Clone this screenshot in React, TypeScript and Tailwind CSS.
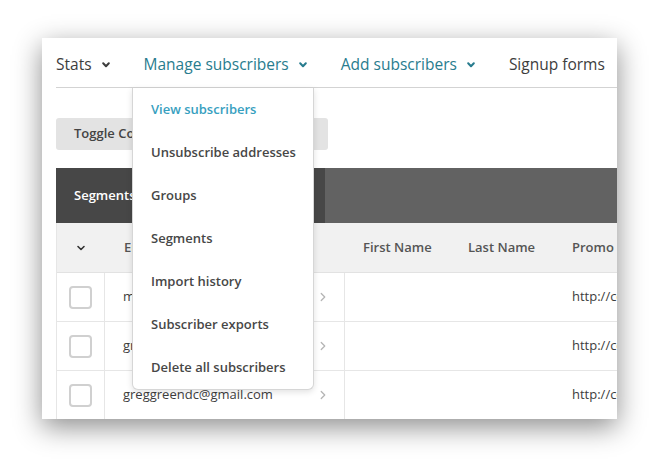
import { ChevronDown, ChevronRight } from 'lucide-react'

const MENU = [
  'View subscribers',
  'Unsubscribe addresses',
  'Groups',
  'Segments',
  'Import history',
  'Subscriber exports',
  'Delete all subscribers',
]

const ROWS = ['mike@example.com', 'greg@example.com', 'greggreendc@gmail.com']

function Caret() {
  return (
    <svg width="8" height="6" viewBox="0 0 8 6" fill="none">
      <polyline points="1.2,1.2 4,4.2 6.8,1.2" stroke="currentColor" strokeWidth="2" strokeLinecap="round" strokeLinejoin="round" />
    </svg>
  )
}

function NavItem({ label, teal, caret }: { label: string; teal?: boolean; caret?: boolean }) {
  return (
    <div className={`flex items-center gap-[10px] text-[15.5px] ${teal ? 'text-[#287c8e]' : 'text-[#3d3d3d]'}`}>
      <span>{label}</span>
      {caret && <Caret />}
    </div>
  )
}

export default function App() {
  return (
    <div className="w-[659px] h-[465px] bg-white pl-[42px] pt-[38px]" style={{ fontFamily: '"Open Sans", "Liberation Sans", sans-serif' }}>
      <div className="relative w-[575px] h-[381px] overflow-hidden bg-white shadow-[0_8px_26px_rgba(0,0,0,0.45)]">
        <div className="pl-[14px] w-[700px]">
          {/* top nav */}
          <div className="flex h-[50px] items-center gap-[34px] border-b border-[#d3d3d3] pt-[4px] font-medium">
            <NavItem label="Stats" caret />
            <NavItem label="Manage subscribers" teal caret />
            <NavItem label="Add subscribers" teal caret />
            <NavItem label="Signup forms" />
          </div>

          <button className="mt-[30px] h-[32px] w-[272px] rounded-[3px] bg-[#e3e3e3] pl-[18px] text-left text-[13px] font-semibold text-[#444]">
            Toggle Columns
          </button>

          {/* segments bar */}
          <div className="mt-[18px] flex h-[55px] bg-[#626262]">
            <div className="flex w-[269px] items-center bg-[#474747] pl-[18px] text-[13px] font-semibold text-white">
              Segments
            </div>
          </div>

          {/* table */}
          <div className="border-l border-[#e6e6e6] text-[13px]">
            <div className="flex h-[50px] items-center border-b border-[#e2e2e2] bg-[#f1f1f1] font-semibold text-[#555]">
              <div className="flex w-[48px] justify-center text-[#333]">
                <ChevronDown size={12} strokeWidth={3.2} />
              </div>
              <div className="w-[240px] pl-[19px]">Email</div>
              <div className="w-[105px] pl-[18px]">First Name</div>
              <div className="w-[104px] pl-[18px]">Last Name</div>
              <div className="w-[105px] pl-[18px]">Promo</div>
            </div>
            {ROWS.map((email) => (
              <div key={email} className="flex h-[49px] border-b border-[#e6e6e6] text-[#3d3d3d]">
                <div className="flex w-[48px] items-center justify-center border-r border-[#e6e6e6]">
                  <div className="h-[23px] w-[23px] rounded-[4px] border-2 border-[#d0d0d0]" />
                </div>
                <div className="flex w-[240px] items-center justify-between border-r border-[#e6e6e6] pl-[18px] pr-[14px]">
                  <span>{email}</span>
                  <ChevronRight size={14} strokeWidth={2.2} className="text-[#b5b5b5]" />
                </div>
                <div className="w-[105px]" />
                <div className="w-[104px]" />
                <div className="flex w-[105px] items-center pl-[18px]">http://cdn.example.com</div>
              </div>
            ))}
          </div>
        </div>

        {/* dropdown menu */}
        <div className="absolute left-[90px] top-[50px] w-[182px] rounded-b-[6px] border border-t-0 border-[#d6d6d6] bg-white shadow-[0_2px_6px_rgba(0,0,0,0.12)]">
          {MENU.map((item, i) => (
            <div
              key={item}
              className={`flex h-[43px] items-center pl-[18px] text-[13px] font-semibold ${i === 0 ? 'text-[#37a0c0]' : 'text-[#474747]'}`}
            >
              {item}
            </div>
          ))}
        </div>
      </div>
    </div>
  )
}
